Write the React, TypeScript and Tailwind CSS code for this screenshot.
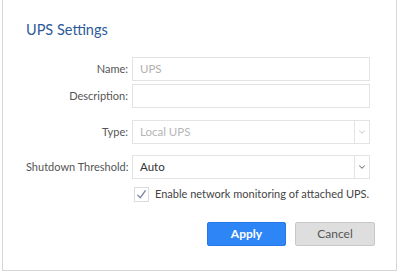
import { ChevronDown } from 'lucide-react';

const font = { fontFamily: 'Lato, "Open Sans", Arial, sans-serif' };

function Row({ label, children, className = '' }: { label: string; children: React.ReactNode; className?: string }) {
  return (
    <div className={`flex items-center ${className}`}>
      <label className="w-[106px] shrink-0 whitespace-nowrap pr-[4px] text-right text-[11px] text-[#555]">{label}</label>
      {children}
    </div>
  );
}

function SelectBox({ value, disabled }: { value: string; disabled?: boolean }) {
  return (
    <div className="flex h-[24px] w-[238px] border border-[#e3e3e3] bg-white">
      <span className={`flex-1 pl-[7px] text-[11.5px] leading-[22px] ${disabled ? 'text-[#b5b5b5]' : 'text-[#333]'}`}>{value}</span>
      <span className="flex w-[15px] items-center justify-center border-l border-[#e3e3e3]">
        <ChevronDown className={`h-[10px] w-[10px] ${disabled ? 'text-[#d0d0d0]' : 'text-[#777]'}`} strokeWidth={2.5} />
      </span>
    </div>
  );
}

export default function App() {
  return (
    <div className="h-[275px] w-[400px] bg-white" style={font}>
      <div className="ml-[2px] h-[271px] w-[395px] border-x border-b border-[#d6d6d6] pl-[23px]">
        <h2 className="pt-[19px] text-[14.5px] leading-[22px] text-[#2d5a98]">UPS Settings</h2>

        <Row label="Name:" className="mt-[16px]">
          <div className="h-[24px] w-[238px] border border-[#e3e3e3] pl-[7px] text-[11.5px] leading-[22px] text-[#b0b0b0]">UPS</div>
        </Row>
        <Row label="Description:" className="mt-[3px]">
          <div className="h-[24px] w-[238px] border border-[#e3e3e3]" />
        </Row>
        <Row label="Type:" className="mt-[12px]">
          <SelectBox value="Local UPS" disabled />
        </Row>
        <Row label="Shutdown Threshold:" className="mt-[11px]">
          <SelectBox value="Auto" />
        </Row>

        <div className="mt-[7px] flex items-center pl-[108px]">
          <span className="flex h-[15px] w-[15px] items-center justify-center border border-[#dcdcdc] bg-white">
            <svg viewBox="0 0 16 16" className="h-[13px] w-[13px]" fill="none" stroke="#7a82a0" strokeWidth="1.6">
              <path d="M3 8.5 L6.5 12 L13 3" />
            </svg>
          </span>
          <span className="ml-[6px] whitespace-nowrap text-[11px] text-[#444]">Enable network monitoring of attached UPS.</span>
        </div>

        <div className="mt-[19px] flex pl-[181px]">
          <button className="h-[24px] w-[79px] rounded-[2px] border border-[#2a77e8] bg-[#2e86f6] text-[12px] font-bold text-white">Apply</button>
          <button className="ml-[9px] h-[24px] w-[80px] rounded-[2px] border border-[#c8c8c8] bg-[#dedede] text-[12px] text-[#555]">Cancel</button>
        </div>
      </div>
    </div>
  );
}
